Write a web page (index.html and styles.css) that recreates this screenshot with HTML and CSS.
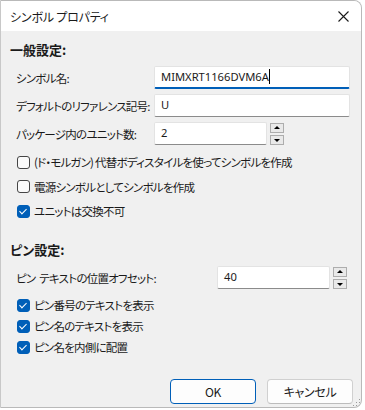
FILE: index.html
```html
<!DOCTYPE html>
<html lang="ja">
<head>
  <meta charset="UTF-8">
  <meta name="viewport" content="width=device-width, initial-scale=1.0">
  <title>シンボル プロパティ</title>
  <link rel="stylesheet" href="styles.css">
</head>
<body>

  <div class="window">
    <!-- Title bar -->
    <div class="titlebar">
      <span class="title">シンボル プロパティ</span>
      <span class="close">
        <svg width="11" height="11" viewBox="0 0 11 11"><path d="M0.5 0.5 L10.5 10.5 M10.5 0.5 L0.5 10.5" stroke="#1a1a1a" stroke-width="1.1" fill="none"/></svg>
      </span>
    </div>

    <div class="content">
      <!-- General settings -->
      <div class="section-title">一般設定:</div>

      <div class="field first">
        <label class="field-label">シンボル名:</label>
        <div class="textbox wide focused">MIMXRT1166DVM6A<span class="caret"></span></div>
      </div>
      <div class="field">
        <label class="field-label">デフォルトのリファレンス記号:</label>
        <div class="textbox wide">U</div>
      </div>
      <div class="field">
        <label class="field-label">パッケージ内のユニット数:</label>
        <div class="textbox narrow">2</div>
        <div class="spinner">
          <span class="spin up"></span>
          <span class="spin down"></span>
        </div>
      </div>

      <div class="checks general-checks">
        <div class="check"><span class="box"></span>(ド・モルガン) 代替ボディスタイルを使ってシンボルを作成</div>
        <div class="check"><span class="box"></span>電源シンボルとしてシンボルを作成</div>
        <div class="check"><span class="box checked"></span>ユニットは交換不可</div>
      </div>

      <!-- Pin settings -->
      <div class="section-title pin-title">ピン設定:</div>

      <div class="field offset">
        <label class="field-label offset-label">ピン テキストの位置オフセット:</label>
        <div class="textbox narrow">40</div>
        <div class="spinner">
          <span class="spin up"></span>
          <span class="spin down"></span>
        </div>
      </div>

      <div class="checks pin-checks">
        <div class="check small"><span class="box checked"></span>ピン番号のテキストを表示</div>
        <div class="check small"><span class="box checked"></span>ピン名のテキストを表示</div>
        <div class="check small"><span class="box checked"></span>ピン名を内側に配置</div>
      </div>

      <!-- Buttons -->
      <div class="buttons">
        <button class="btn default">OK</button>
        <button class="btn">キャンセル</button>
      </div>
      <div class="grip"></div>
    </div>
  </div>

</body>
</html>
```

FILE: styles.css
```css
body {
  margin: 0;
  background-color: #ffffff;
  font-family: "Noto Sans CJK JP", "Noto Sans", sans-serif;
  font-size: 11.5px;
  letter-spacing: -0.75px;
  font-feature-settings: "palt";
  color: #1a1a1a;
  white-space: nowrap;
}

.window {
  width: 362px;
  height: 408px;
  box-sizing: border-box;
  border: 1px solid #b9b9b9;
  border-left-color: #c8c8c8;
  border-radius: 0 8px 8px 0;
  overflow: hidden;
  display: flex;
  flex-direction: column;
  background-color: #f0f0f0;
}

/* Title bar */
.titlebar {
  height: 30px;
  flex-shrink: 0;
  background-color: #ffffff;
  display: flex;
  align-items: center;
  justify-content: space-between;
  padding: 0 12px 0 9px;
}

.title {
  font-size: 12px;
  letter-spacing: -0.2px;
}

.close {
  display: flex;
  margin-top: 1px;
}

/* Dialog body */
.content {
  flex: 1;
  position: relative;
  padding: 10px 0 0 9px;
}

.section-title {
  height: 18px;
  line-height: 18px;
  font-size: 13px;
  letter-spacing: 0;
  font-weight: bold;
}

.pin-title {
  margin-top: 17px;
}

.field {
  display: flex;
  align-items: center;
  height: 23px;
  margin-top: 5px;
  padding-left: 6px;
}

.field.first {
  margin-top: 7px;
}

.field-label {
  width: 138px;
  flex-shrink: 0;
}

.offset-label {
  width: 201px;
  word-spacing: 2px;
}

.field.offset {
  margin-top: 8px;
  height: 22px;
}

.textbox {
  height: 23px;
  box-sizing: border-box;
  background-color: #ffffff;
  border: 1px solid #e3e3e3;
  border-bottom-color: #8b8b8b;
  border-radius: 2px;
  padding-left: 6px;
  line-height: 20px;
  font-family: "Noto Sans", sans-serif;
  font-size: 11.2px;
  letter-spacing: 0;
  color: #1a1a1a;
}

.textbox.wide {
  width: 196px;
}

.textbox.narrow {
  width: 113px;
}

.textbox.focused {
  border-bottom: 2px solid #005fb8;
}

.caret {
  display: inline-block;
  width: 1px;
  height: 15px;
  background-color: #000000;
  vertical-align: -3px;
}

/* Up/down spinner */
.spinner {
  display: flex;
  flex-direction: column;
  gap: 2px;
  margin-left: 3px;
}

.spin {
  width: 14px;
  height: 10px;
  box-sizing: border-box;
  border: 1px solid #adadad;
  background-color: #e9e9e9;
  position: relative;
}

.spin::after {
  content: "";
  position: absolute;
  left: 3px;
  width: 0;
  height: 0;
  border-left: 3px solid transparent;
  border-right: 3px solid transparent;
}

.spin.up::after {
  top: 2px;
  border-bottom: 3px solid #000000;
}

.spin.down::after {
  top: 3px;
  border-top: 3px solid #000000;
}

/* Checkboxes */
.checks {
  padding-left: 7px;
}

.general-checks {
  margin-top: 5px;
}

.pin-checks {
  margin-top: 6px;
}

.check {
  display: flex;
  align-items: center;
  height: 24.5px;
}

.check.small {
  height: 21px;
}

.box {
  width: 13px;
  height: 13px;
  box-sizing: border-box;
  border: 1px solid #454545;
  border-radius: 3px;
  background-color: #fafafa;
  margin-right: 4px;
  position: relative;
  flex-shrink: 0;
}

.box.checked {
  background-color: #005fb8;
  border-color: #005fb8;
}

.box.checked::after {
  content: "";
  position: absolute;
  left: 3px;
  top: 1px;
  width: 3px;
  height: 6px;
  border-right: 1px solid #ffffff;
  border-bottom: 1px solid #ffffff;
  transform: rotate(45deg);
}

/* Buttons */
.buttons {
  display: flex;
  justify-content: flex-end;
  gap: 11px;
  margin-top: 21px;
  padding-right: 8px;
}

.btn {
  width: 86px;
  height: 25px;
  box-sizing: border-box;
  border: 1px solid #d0d0d0;
  border-bottom-color: #bcbcbc;
  border-radius: 4px;
  background-color: #fdfdfd;
  font-family: "Noto Sans CJK JP", sans-serif;
  font-feature-settings: "palt";
  font-size: 12px;
  letter-spacing: -0.3px;
  color: #1a1a1a;
  padding: 0;
}

.btn.default {
  border: 1px solid #005fb8;
}

/* Resize grip */
.grip {
  position: absolute;
  right: 1px;
  bottom: 1px;
  width: 8px;
  height: 8px;
  background-image: radial-gradient(circle, #9a9a9a 0.8px, transparent 1px);
  background-size: 3px 3px;
  clip-path: polygon(100% 0, 100% 100%, 0 100%);
}
```
